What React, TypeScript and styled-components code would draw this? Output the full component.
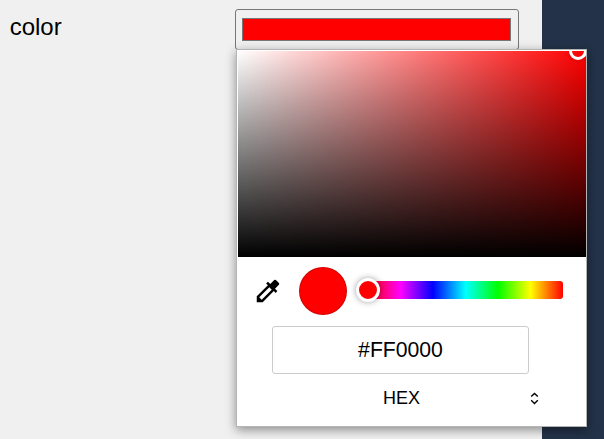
import React from 'react';
import styled, { createGlobalStyle } from 'styled-components';

const GlobalStyle = createGlobalStyle`
  * { box-sizing: border-box; }
  body { margin: 0; overflow: hidden; font-family: "Liberation Sans", Arial, sans-serif; color: #000; }
`;

const Page = styled.main`
  display: flex;
  width: 604px;
  height: 439px;
  background: #233248;
`;

const Panel = styled.section`
  width: 542px;
  height: 100%;
  padding: 9px 0 0 9px;
  background: #f0f0f0;
`;

const Field = styled.div`
  display: grid;
  grid-template-columns: 226px 284px;
`;

const Label = styled.label`
  padding: 4px 0 0 0.7px;
  font-size: 24px;
  line-height: 28px;
`;

const Control = styled.div`
  position: relative;
`;

const ColorButton = styled.button`
  display: block;
  width: 284px;
  height: 41px;
  padding: 8px 7px 8px 6px;
  border: 1px solid #767676;
  border-radius: 3px;
  background: #f0f0f0;
`;

const Swatch = styled.span<{ $color: string }>`
  display: block;
  height: 23px;
  border: 1px solid #777;
  background: ${({ $color }) => $color};
`;

const Popup = styled.div`
  position: absolute;
  top: 40px;
  left: 1px;
  width: 351px;
  height: 378px;
  padding: 1px 0 0 1px;
  border: 1px solid #b4b4b4;
  background: #fff;
  box-shadow: 0 3px 10px rgba(0, 0, 0, 0.42);
`;

const Spectrum = styled.div<{ $color: string }>`
  position: relative;
  height: 206px;
  overflow: hidden;
  background:
    linear-gradient(to top, #000, transparent),
    linear-gradient(to right, #fff, rgba(255, 255, 255, 0)),
    ${({ $color }) => $color};
`;

const SpectrumRing = styled.span`
  position: absolute;
  top: -9px;
  right: -1px;
  width: 18px;
  height: 18px;
  border: 3px solid #fff;
  border-radius: 50%;
  box-shadow: 0 0 4px rgba(0, 0, 0, 0.2);
`;

const Tools = styled.div`
  display: flex;
  align-items: center;
  height: 68px;
  padding-left: 15px;
`;

const Preview = styled.span<{ $color: string }>`
  width: 48px;
  height: 48px;
  margin-left: 16px;
  border: 1px solid rgba(0, 0, 0, 0.18);
  border-radius: 50%;
  background: ${({ $color }) => $color};
`;

const HueTrack = styled.div`
  position: relative;
  width: 195px;
  height: 18px;
  margin: 0 0 2px 21px;
  border-radius: 3px;
  background: linear-gradient(to left, #f00, #ff0, #0f0, #0ff, #00f, #f0f, #f00);
`;

const HueThumb = styled.span<{ $color: string }>`
  position: absolute;
  top: -3px;
  left: -12px;
  width: 24px;
  height: 24px;
  border: 3px solid #fff;
  border-radius: 50%;
  background: ${({ $color }) => $color};
  box-shadow: 0 0 6px rgba(0, 0, 0, 0.38);
`;

const HexInput = styled.input`
  display: block;
  width: 257px;
  height: 48px;
  margin: 1px 0 0 34px;
  padding: 0;
  border: 1px solid #ccc;
  border-radius: 3px;
  outline: none;
  background: #fff;
  color: #000;
  font: 21.2px "Liberation Sans", Arial, sans-serif;
  text-align: center;
`;

const FormatSelect = styled.div`
  display: grid;
  grid-template-columns: 1fr 11px;
  align-items: center;
  width: 268px;
  height: 24px;
  margin: 12px 0 0 34px;
  font-size: 18px;
  line-height: 24px;
`;

const FormatName = styled.span`
  padding-left: 2px;
  text-align: center;
`;

const Eyedropper = () => (
  <svg width="30" height="30" viewBox="0 0 24 24" aria-label="Pick a color">
    <path d="M20.71 5.63l-2.34-2.34a1 1 0 0 0-1.41 0l-3.12 3.12-1.93-1.91-1.41 1.41 1.42 1.42L3 16.25V21h4.75l8.92-8.92 1.42 1.42 1.41-1.41-1.92-1.92 3.12-3.12a1 1 0 0 0 .01-1.42zM6.92 19L5 17.08l8.06-8.06 1.92 1.92L6.92 19z" />
  </svg>
);

const UpDown = () => (
  <svg width="11" height="14" viewBox="0 0 11 14" fill="none" stroke="#000" strokeWidth="1.4">
    <path d="M2.2 5.6 5.5 2.4 8.8 5.6M2.2 9.2l3.3 3.2 3.3-3.2" />
  </svg>
);

export default function App() {
  const color = '#FF0000';
  return (
    <>
      <GlobalStyle />
      <Page>
        <Panel>
          <Field>
            <Label htmlFor="color">color</Label>
            <Control>
              <ColorButton id="color" type="button">
                <Swatch $color={color} />
              </ColorButton>
              <Popup>
                <Spectrum $color={color}>
                  <SpectrumRing />
                </Spectrum>
                <Tools>
                  <Eyedropper />
                  <Preview $color={color} />
                  <HueTrack>
                    <HueThumb $color={color} />
                  </HueTrack>
                </Tools>
                <HexInput value={color} readOnly aria-label="Hex value" />
                <FormatSelect>
                  <FormatName>HEX</FormatName>
                  <UpDown />
                </FormatSelect>
              </Popup>
            </Control>
          </Field>
        </Panel>
      </Page>
    </>
  );
}
